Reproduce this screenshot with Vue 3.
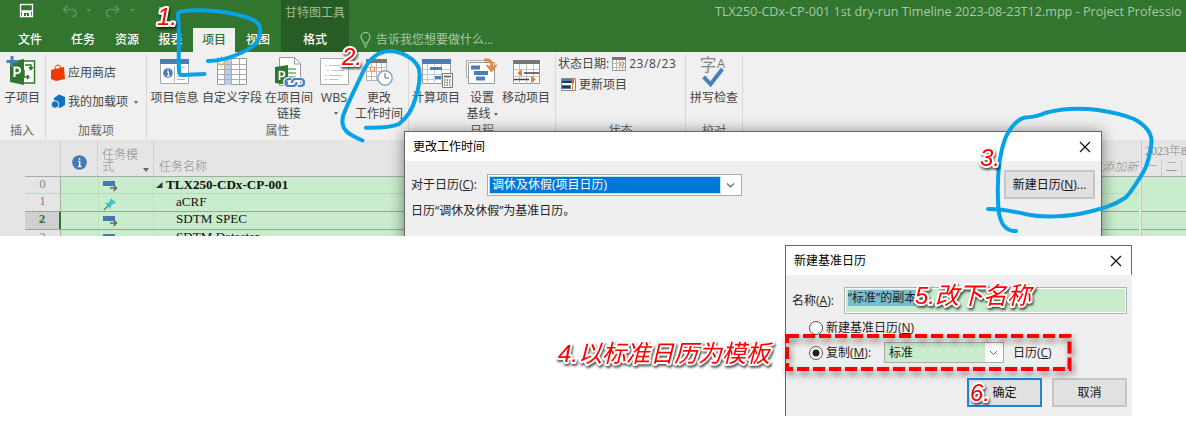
<script setup>
const tabs = [
  { label: '文件', w: 60 }, { label: '任务', w: 46 }, { label: '资源', w: 42 },
  { label: '报表', w: 45 }, { label: '项目', w: 42, active: true }, { label: '视图', w: 46 },
]
const rows = [
  { n: 0, name: 'TLX250-CDx-CP-001', cls: 'summary' },
  { n: 1, name: 'aCRF', pin: true },
  { n: 2, name: 'SDTM SPEC', cls: 'current' },
  { n: 3, name: 'SDTM Dataster', cls: 'last' },
]
</script>

<template>
  <div class="page">
    <section class="shot">
      <header class="top">
        <div class="left">
          <svg class="qat" viewBox="0 0 281 28">
            <path d="M20.500 4.500h12v12h-12zM21 11h11" fill="none" stroke="#fff" stroke-width="1.300" />
            <path d="M22 11h9v5h-9z" fill="#fff" /><path d="M24 13h5v3h-2v-2h-1v2h-2z" fill="#31752f" />
            <g fill="none" stroke="#5b9558" stroke-width="1.600">
              <path d="M67.500 5.500l-4 4 4 4M64 9.500h8q4 0 4 3.500t-4 3.500" />
              <path d="M115 5.500l4 4-4 4M118.500 9.500h-8q-4 0-4 3.500t4 3.500" />
            </g>
            <path d="M86 9h5l-2.500 3zM130 9h5l-2.500 3z" fill="#5b9558" />
            <path d="M159 8h7" stroke="#fff" />
          </svg>
          <nav class="tabs">
            <span v-for="t in tabs" :key="t.label" :class="{ active: t.active }" :style="{ width: t.w + 'px' }">{{ t.label }}</span>
          </nav>
        </div>
        <div class="context"><div class="ctx-title">甘特图工具</div><div class="ctx-tab">格式</div></div>
        <div class="right">
          <div class="doc">TLX250-CDx-CP-001 1st dry-run Timeline 2023-08-23T12.mpp - Project Professio</div>
          <div class="tell">
            <svg width="11" height="16" viewBox="0 0 11 16"><path d="M3.500 11C3.500 8.500 1 7.500 1 5a4.500 4.500 0 0 1 9 0c0 2.500-2.500 3.500-2.500 6zM3.500 13h4M4 15h3" fill="none" stroke="#a9c9a6" stroke-width="1.200" /></svg>
            <span>告诉我您想要做什么...</span>
          </div>
        </div>
      </header>

      <div class="ribbon">
        <div class="group w46">
          <div class="items">
            <div class="big c44">
              <svg viewBox="0 52 44 38">
                <path d="M21 61h13.500v22H21z" fill="#fff" stroke="#31752f" stroke-width="1.500" />
                <path d="M25 65h6v4m-2-2 2 2.500 2-2.500M24 70v7h5m-2-2 2 2-2 2" fill="none" stroke="#31752f" stroke-width="1.500" />
                <path d="M10 62l14-3v26l-14-3z" fill="#31752f" />
                <path d="M14.500 77V67.500h2.500q3 0 3 2.800t-3 2.900h-2" fill="none" stroke="#fff" stroke-width="2" />
                <path d="M12 56v11M6.500 61.500h11" stroke="#4a7ebb" stroke-width="3" />
              </svg>
              <span>子项目</span>
            </div>
          </div>
          <div class="gname c44">插入</div>
        </div>
        <div class="group w101">
          <div class="items stack">
            <div class="small">
              <svg width="15" height="18" viewBox="51 64 15 18"><path d="M51 70l13-3 1 12-9 2-5-2z" fill="#eb3c00" /><path d="M55 70q0-5 3-5t3 4" fill="none" stroke="#eb3c00" /></svg>
              <span>应用商店</span>
            </div>
            <div class="small addins">
              <svg width="15" height="18" viewBox="51 94 15 18"><path d="M54 99l5-3.500 6 2.500v8l-5 3-6-3z" fill="#0f70c4" /><circle cx="55" cy="105.500" r="3.800" fill="#0f70c4" stroke="#f0f0f0" /></svg>
              <span>我的加载项</span><i class="caret"></i>
            </div>
          </div>
          <div class="gname">加载项</div>
        </div>
        <div class="group w262">
          <div class="items">
            <div class="big c55">
              <svg viewBox="147 52 55 38">
                <path d="M160.500 60.500h28v23h-28z" fill="#fff" stroke="#a5a5a5" /><path d="M160 59h29v5h-29z" fill="#4a7ebb" />
                <circle cx="168" cy="73" r="4.800" fill="#4a7ebb" /><path d="M167 72h1.500v4M166.500 76h3.500M168 69.500v1.200" stroke="#fff" stroke-width="1.200" fill="none" />
                <path d="M174.500 66v16M177 67.500h8M177 70.500h4M177 73.500h8M177 76.500h9M177 79.500h8" stroke="#b5b5b5" />
              </svg>
              <span>项目信息</span>
            </div>
            <div class="big c60">
              <svg viewBox="202 52 60 38">
                <path d="M217.500 58.500h29v26h-29z" fill="#fff" stroke="#999" /><path d="M224.500 58h7v27h-7z" fill="#b7d0ea" />
                <path d="M218 64.500h29M218 69.500h29M218 74.500h29M218 79.500h29M224.500 59v26M231.500 59v26M239.500 59v26" stroke="#adadad" fill="none" />
                <path d="M221.500 56v11M216 61.500h11M217.500 57.500l8 8M225.500 57.500l-8 8" stroke="#edb66c" stroke-width="1.300" /><circle cx="221.500" cy="61.500" r="2" fill="#fff" />
              </svg>
              <span>自定义字段</span>
            </div>
            <div class="big c54">
              <svg viewBox="262 52 54 38">
                <path d="M279.500 57.500h15l6 6v22h-21z" fill="#fff" stroke="#999" /><path d="M294.500 58v6h6" fill="none" stroke="#999" />
                <path d="M286 69h10M286 73h10M286 77h10" stroke="#6fac6d" stroke-width="1.500" />
                <path d="M275 67l13-2v20l-13-2z" fill="#31752f" /><path d="M279.500 80v-8.500h2q3 0 3 2.500t-3 2.500h-2" stroke="#fff" stroke-width="1.700" fill="none" />
                <path d="M290 79h-2q-3 0-3 3.500t3 4h5q3 0 3-4M299 86h2q3 0 3-3.500t-3-3.500h-6q-3 0-3 3.500" stroke="#f0f0f0" stroke-width="4" fill="none" />
                <path d="M291 79h-2q-3.500 0-3.500 3.500t3.500 3.500h4q3.500 0 3.500-4M298 86h2.500q3.500 0 3.500-3.500t-3.500-3.500h-5q-3.500 0-3.500 4" stroke="#4a7ebb" stroke-width="2.200" fill="none" />
              </svg>
              <span>在项目间<br>链接</span>
            </div>
            <div class="big c36">
              <svg viewBox="316 52 36 38">
                <path d="M320.500 58.500h28v26h-28z" fill="#fff" stroke="#aaa" />
                <path d="M325 65.500h2m2 0h13M327 70.500h2m3 0h12M325 75.500h2m2 0h13M325 79.500h2m2 0h9" stroke="#c2c2c2" />
              </svg>
              <span class="wbs">WBS</span><i class="caret"></i>
            </div>
            <div class="big c54">
              <svg viewBox="352 52 54 38">
                <path d="M366.500 59.500h20v21h-20z" fill="#fff" stroke="#b5b5b5" /><path d="M366 59h21v4h-21z" fill="#777" />
                <path d="M367 67.500h19M367 71.500h19M367 76.500h19M371.500 63v17M376.500 63v17M381.500 63v17" stroke="#bbb" />
                <path d="M370.500 67h4v4h-4z" fill="#fff" stroke="#ed8b3b" />
                <circle cx="385" cy="78" r="7.200" fill="#fff" stroke="#7da5d1" stroke-width="1.500" /><path d="M385 73v5h4" stroke="#666" fill="none" />
              </svg>
              <span>更改<br>工作时间</span>
            </div>
          </div>
          <div class="gname">属性</div>
        </div>
        <div class="group w147">
          <div class="items">
            <div class="big c54">
              <svg viewBox="409 52 54 38">
                <path d="M422.500 59.500h28v24h-28z" fill="#fff" stroke="#9a9a9a" /><path d="M422 59h29v5h-29z" fill="#4a7ebb" />
                <path d="M423 69.500h27M423 74.500h27M423 79.500h27M427.500 64v20M434.500 64v20M441.500 64v20" stroke="#b8cbe0" />
                <path d="M430 68.500h12M435 77.500h6" stroke="#4a7ebb" stroke-width="3" />
                <path d="M442.500 73.500h10v14h-10z" fill="#fff" stroke="#777" /><path d="M444 76.500h7" stroke="#777" stroke-width="2" />
                <path d="M444 80h7M444 82.500h7M444 85h7" stroke="#777" stroke-dasharray="1.500 1" stroke-width="1.300" />
              </svg>
              <span>计算项目</span>
            </div>
            <div class="big c38">
              <svg viewBox="463 52 38 38">
                <path d="M466.500 60.500h20v17h-20z" fill="#fff" stroke="#aaa" /><path d="M468.500 62.500h26v21h-26z" fill="#fff" stroke="#999" />
                <path d="M471 67.500h9M474 73h14M476 78.500h9" stroke="#4a7ebb" stroke-width="4" />
                <path d="M484 60h3q5 0 5 7" fill="none" stroke="#e38b3f" stroke-width="3" /><path d="M486 65l5.500 7 5.500-7-5.500 2z" fill="#e38b3f" stroke="#e38b3f" />
              </svg>
              <span>设置<br>基线 <i class="caret inline"></i></span>
            </div>
            <div class="big c50">
              <svg viewBox="501 52 50 38">
                <path d="M513.500 60.500h26v23h-26z" fill="#fff" stroke="#999" /><path d="M513 60h27v4h-27z" fill="#777" />
                <path d="M514 69.500h25M514 76.500h25M519.500 64v20M526.500 64v20M533.500 64v20" stroke="#c3c3c3" />
                <path d="M524 73h15M514 79.500h15" stroke="#444" stroke-width="1.500" /><path d="M517 73l5-3.500v7zM536 79.500l-5-3.500v7z" fill="#e9812a" />
              </svg>
              <span>移动项目</span>
            </div>
          </div>
          <div class="gname">日程</div>
        </div>
        <div class="group w130">
          <div class="items stack status">
            <div class="small">
              <span>状态日期:</span>
              <svg width="14" height="14" viewBox="0 0 14 14"><path d="M.5.500h13v13H.5z" fill="#fff" stroke="#999" /><path d="M0 0h14v3H0z" fill="#777" /><path d="M1 6.500h12M1 10.500h12M4.500 3v10M7.500 3v10M10.500 3v10" stroke="#bbb" /><path d="M8.500 5.500h3v3h-3z" fill="#fff" stroke="#ed8b3b" /></svg>
              <span class="date">23/8/23</span>
            </div>
            <div class="small upd">
              <svg width="15" height="14" viewBox="0 0 15 14"><path d="M.5.500h14v12H.5z" fill="#fff" stroke="#888" /><path d="M1 3h12M1 9h9" stroke="#4a7ebb" stroke-width="4" /><path d="M1 4h10M1 9h8" stroke="#222" stroke-width="1.500" /><path d="M11.500 0v13" stroke="#e9812a" /></svg>
              <span>更新项目</span>
            </div>
          </div>
          <div class="gname">状态</div>
        </div>
        <div class="group w57">
          <div class="items">
            <div class="big c57">
              <svg viewBox="686 52 57 38">
                <text x="700" y="71" class="zi">字</text><text x="717.500" y="68" class="la">A</text>
                <path d="M704 77l7 7.500 12-15.500" fill="none" stroke="#4a7ebb" stroke-width="4" />
              </svg>
              <span>拼写检查</span>
            </div>
          </div>
          <div class="gname">校对</div>
        </div>
      </div>

      <div class="sheet">
        <div class="table">
          <div class="thead">
            <div class="num"></div>
            <div class="info"><svg width="15" height="15" viewBox="0 0 15 15"><circle cx="7.500" cy="7.500" r="7.300" fill="#4579b5" /><path d="M7.500 3v1.800M6.500 6.500h1.200v5M6 11.500h3.500" stroke="#fff" stroke-width="1.400" fill="none" /></svg></div>
            <div class="mode"><span>任务模式</span><i class="caret"></i></div>
            <div class="name"><span>任务名称</span></div>
            <div class="add">添加新</div>
          </div>
          <div v-for="r in rows" :key="r.n" class="row" :class="r.cls">
            <div class="num">{{ r.n }}</div>
            <div class="info"></div>
            <div class="mode">
              <svg v-if="r.pin" width="14" height="14" viewBox="0 0 14 14"><path d="M8 1l5 5-3 1-2 2-.5 3-2.500-3L2 6l3.500-.5L7.500 3z" fill="#3cc8cb" /><path d="M5.500 8.500L1 13" stroke="#777" stroke-width="1.400" /></svg>
              <svg v-else width="15" height="12" viewBox="0 0 15 12"><path d="M0 1h12v5H0z" fill="#4579b5" /><path d="M7 8h6M10.500 5l3 3-3 3" fill="none" stroke="#666" stroke-width="1.500" /></svg>
            </div>
            <div class="name"><svg v-if="r.n === 0" width="7" height="7" viewBox="0 0 7 7"><path d="M6.500 0v6H0z" fill="#333" /></svg><span>{{ r.name }}</span></div>
          </div>
        </div>
        <div class="gantt">
          <div class="gh1">2023年8</div>
          <div class="gh2"><span>一</span><span>二</span></div>
          <div class="gr"></div><div class="gr line"></div><div class="gr line"></div><div class="gr"></div>
        </div>
      </div>

      <div class="dlg worktime">
        <div class="dtitle"><span>更改工作时间</span><svg width="12" height="12" viewBox="0 0 12 12"><path d="M1 1l10 10M11 1L1 11" stroke="#111" stroke-width="1.200" /></svg></div>
        <div class="dbody">
          <div class="fields">
            <div class="line1"><label>对于日历(<u>C</u>):</label>
              <div class="select"><b>调休及休假(项目日历)</b><svg width="19" height="18" viewBox="0 0 19 18"><path d="M6 7.500l3.500 3.500L13 7.500" fill="none" stroke="#666" stroke-width="1.100" /></svg></div>
            </div>
            <p>日历“调休及休假”为基准日历。</p>
          </div>
          <button>新建日历(<u>N</u>)...</button>
        </div>
      </div>
    </section>

    <div class="dlg base">
      <div class="dtitle"><span>新建基准日历</span><svg width="12" height="12" viewBox="0 0 12 12"><path d="M1 1l10 10M11 1L1 11" stroke="#111" stroke-width="1.200" /></svg></div>
      <div class="bbody">
        <div class="nrow"><label>名称(<u>A</u>):</label><div class="input"><mark>“标准”的副本</mark></div></div>
        <div class="radio r1"><i></i><span>新建基准日历(<u>N</u>)</span></div>
        <div class="radio r2"><i class="on"></i><span class="cp">复制(<u>M</u>):</span>
          <div class="combo"><span>标准</span><svg width="18" height="19" viewBox="0 0 18 19"><path d="M5 8l3.500 3.500L12 8" fill="none" stroke="#666" /></svg></div>
          <span>日历(<u>C</u>)</span>
        </div>
        <div class="btns"><button class="ok">确定</button><button>取消</button></div>
      </div>
    </div>

    <svg class="notes" viewBox="0 0 1186 430">
      <g class="ink">
        <path d="M204.500 74C196 74 188 75.500 182 75Q179 75 179 70C178 58 180 35 178 16Q177 11 184 11C200 9 232 11 251 19C260 22 262 29 259 37C257 46 246 51 235 55.500C226 59 217 61 208 61" />
        <path d="M366 127.700C382 128 392 127 399 124C408 117 413 108 415.500 98C419 87 421 78 419 69C416 59 401 51 389 51C376 52 368 61 363 72C356 87 348 102 343 116C340 130 348 134 362.500 140.500" />
        <path d="M1016 231C1005 232 1000 222 998.500 210C997 187 998 158 1005 139C1010 127 1018 119 1025 117.500C1032 117 1037 117 1045 113C1063 108 1082 108 1098 110C1112 112 1124 115 1134 119C1149 127 1153 137 1151 146C1150 154 1148 163 1144 171C1137 182 1131 193 1125 198C1113 206 1100 209 1088 212C1068 217 1042 218 1025 214C1008 210 1000 209 988 209" />
      </g>
      <rect class="dash" x="787" y="336" width="282.500" height="33" />
      <g class="red">
        <text x="157" y="25">1.</text><text x="342" y="65">2.</text><text x="980" y="166">3.</text>
        <text x="558" y="362">4.以标准日历为模板</text><text x="915" y="304">5.改下名称</text><text x="970" y="401">6.</text>
      </g>
    </svg>
  </div>
</template>

<style>
body { background: #fff; overflow: hidden; }
</style>
<style scoped>
* { box-sizing: border-box; }
.page { position: relative; width: 1186px; height: 430px; overflow: hidden; font: 12px/16px "Open Sans", "Noto Sans CJK SC", sans-serif; color: #444; }
svg { display: block; flex: none; }
span, label { white-space: nowrap; }
.shot { position: relative; height: 236px; overflow: hidden; background: #f0f0f0; }
.top { display: flex; height: 52px; background: #31752f; color: #fff; }
.left { width: 281px; }
.qat { width: 281px; height: 28px; }
.tabs { display: flex; height: 24px; line-height: 24px; text-align: center; font-weight: 500; }
.tabs .active { background: #f0f0f0; color: #31752f; }
.context { width: 68px; background: #275c24; text-align: center; }
.ctx-title { height: 28px; line-height: 25px; color: #9fbd9c; }
.ctx-tab { line-height: 24px; font-weight: 500; }
.right { flex: 1; min-width: 0; color: #a9c9a6; }
.doc { height: 28px; margin-left: 366px; font-size: 12.600px; line-height: 24px; white-space: nowrap; }
.tell { display: flex; align-items: center; gap: 5px; height: 24px; padding-left: 11px; }
.ribbon { display: flex; height: 88px; padding-top: 3px; }
.group { display: flex; flex-direction: column; border-right: 1px solid #d9d9d9; height: 84px; }
.w46 { width: 46px; } .w101 { width: 101px; } .w262 { width: 262px; } .w147 { width: 147px; } .w130 { width: 130px; } .w57 { width: 57px; }
.items { display: flex; height: 69px; }
.big { display: flex; flex-direction: column; align-items: center; text-align: center; }
.big > svg { width: 100%; height: 38px; margin-top: -3px; }
.big > span { line-height: 15.500px; }
.big > .caret { margin-top: 6px; margin-left: 4px; }
.wbs { font-size: 12.500px; }
.c36 { width: 36px; } .c38 { width: 38px; } .c44 { width: 44px; } .c50 { width: 50px; } .c54 { width: 54px; } .c55 { width: 55px; } .c57 { width: 57px; } .c60 { width: 60px; }
.gname { padding-top: 2px; text-align: center; color: #666; }
.caret { width: 0; height: 0; border: 2.500px solid transparent; border-top: 3px solid #666; border-bottom: 0; }
.caret.inline { display: inline-block; vertical-align: middle; }
.stack { flex-direction: column; }
.small { display: flex; align-items: center; height: 18px; margin: 9px 0 0 5px; gap: 2px; }
.addins { margin-top: 11px; } .addins .caret { margin-left: 4px; }
.status .small { margin: 0 0 0 2px; gap: 3px; }
.status .upd { margin: 3px 0 0 5px; }
.date { letter-spacing: .6px; }
.zi { font: 17px "Noto Sans CJK SC", sans-serif; fill: #888; }
.la { font: 13px "Open Sans", sans-serif; fill: #777; }

.sheet { display: flex; height: 96px; background: #e5e5e5; font-family: "Liberation Serif", "Noto Sans CJK SC", serif; color: #8b8b8b; }
.table { width: 1114px; margin-left: 25px; flex: none; }
.thead { display: flex; height: 37px; border-bottom: 1px solid #aaa; font-weight: 300; }
.thead > div { border-right: 1px solid #d0d0d0; }
.num { width: 36px; text-align: center; }
.info { width: 37px; display: flex; align-items: center; justify-content: center; }
.thead .info { padding-top: 9px; }
.mode { width: 56px; display: flex; }
.thead .mode { padding: 9px 4px 0; line-height: 12px; justify-content: space-between; }
.thead .mode span { width: 38px; white-space: normal; }
.thead .caret { border-width: 3px 3px 0; border-top: 4px solid #666; margin-top: 19px; }
.thead .name { flex: 1; padding: 19px 5px 0; }
.thead .add { width: 38px; padding: 19px 0 0 1px; font-style: italic; border-right: 0; white-space: nowrap; }
.row { display: flex; height: 17px; border-bottom: 1px solid #bdd8c1; color: #111; font-size: 13.100px; line-height: 16px; }
.row:nth-child(3), .row:nth-child(4) { height: 18px; border-bottom-color: #91a995; }
.row > div { background: #c8eccc; }
.row .num { background: #e5e5e5; color: #8b8b8b; border-right: 1px solid #aaa; line-height: 13px; }
.row.current .num { background: #d0d0d0; color: #31752f; border-right: 2px solid #31752f; font-weight: bold; }
.row .mode { padding: 3px 0 0 4px; border-right: 1px solid #bfe0c3; border-left: 1px solid #bfe0c3; }
.row .name { flex: 1; padding: 0 0 0 22px; }
.row.current .name, .row.last .name { line-height: 14.500px; }
.row.summary .name { display: flex; align-items: center; padding-left: 2px; gap: 3px; font-weight: bold; }
.gantt { flex: 1; margin-left: 2px; border-left: 1px solid #c5c5c5; min-width: 0; font-weight: 300; }
.gh1 { height: 20px; padding: 3px 0 0 3px; white-space: nowrap; }
.gh2 { display: flex; height: 17px; border-bottom: 1px solid #aaa; }
.gh2 span { width: 20px; text-align: center; border-right: 1px solid #ccc; line-height: 14px; }
.gr { height: 17px; background: #c8eccc; }
.gr.line { height: 18px; border-bottom: 1px solid #91a995; }

.dlg { position: absolute; background: #efefef; color: #222; }
.dtitle { display: flex; justify-content: space-between; align-items: center; height: 29px; padding: 0 9px; background: #fff; color: #000; }
.worktime { left: 404px; top: 131px; width: 698px; height: 125px; border: 1px solid #666; box-shadow: 0 1px 14px rgba(0, 0, 0, .45); }
.worktime .dtitle { padding: 0 10px 0 8px; }
.dbody { display: flex; justify-content: space-between; padding: 9px 6px 0; }
.line1 { display: flex; align-items: center; height: 22px; margin-top: 4px; }
.line1 label { width: 76px; }
.select { display: flex; width: 255px; height: 22px; padding: 1px; border: 1px solid #aaa; background: #fff; }
.select b { flex: 1; padding-left: 2px; border: 1px solid #b9e4dc; background: #0078d7; color: #fff; font-weight: 400; line-height: 16px; }
.dbody p { margin: 7px 0 0; }
button { height: 28px; padding: 0; border: 1px solid #b5b5b5; background: #e1e1e1; color: #111; font: inherit; }
.dbody button { width: 91px; height: 29px; border: 2px solid #c6c6c6; }

.base { left: 785px; top: 245px; width: 347px; height: 171px; border-left: 1px solid #666; }
.base .dtitle { height: 30px; border-top: 1px solid #666; border-right: 1px solid #666; padding: 0 9px 0 8px; }
.bbody { padding: 12px 5px 0 6px; }
.nrow { display: flex; align-items: center; }
.nrow label { width: 52px; }
.input { width: 284px; height: 27px; padding: 2px 1px; border: 1px solid #aeb2ba; box-shadow: inset 0 0 0 1px #fff; background: #c8eccc; }
mark { display: inline-block; height: 16px; margin-left: 2px; background: #79bdce; color: #222; white-space: nowrap; }
.radio { display: flex; align-items: center; padding-left: 17px; }
.radio i { width: 14px; height: 14px; margin-right: 3px; border: 1px solid #555; border-radius: 50%; background: #fff; }
.radio i.on { background: radial-gradient(circle, #222 0 3px, #fff 4px); }
.r1 { height: 16px; margin-top: 6px; }
.r2 { height: 21px; margin-top: 6px; }
.cp { width: 58px; }
.combo { display: flex; justify-content: space-between; align-items: center; width: 120px; height: 21px; margin-right: 9px; padding-left: 4px; border: 1px solid #aaa; background: linear-gradient(90deg, #c8eccc 100px, #fff 100px); }
.btns { display: flex; justify-content: flex-end; gap: 10px; margin-top: 15px; }
.btns button { width: 75px; height: 29px; border: 2px solid #c6c6c6; }
.btns .ok { border-color: #2085d8; }

.notes { position: absolute; inset: 0; width: 1186px; height: 430px; }
.ink { fill: none; stroke: #05a2e8; stroke-width: 4; stroke-linecap: round; stroke-linejoin: round; }
.dash { fill: none; stroke: #f00; stroke-width: 4; stroke-dasharray: 12 4; filter: drop-shadow(2px 4px 3px rgba(0, 0, 0, .5)); }
.red { font: italic 24px "Liberation Sans", "Noto Sans CJK SC", sans-serif; fill: #f00; stroke: #fff; stroke-width: 4px; stroke-linejoin: round; paint-order: stroke; filter: drop-shadow(1px 2px 1px rgba(0, 0, 0, .65)); }
</style>
